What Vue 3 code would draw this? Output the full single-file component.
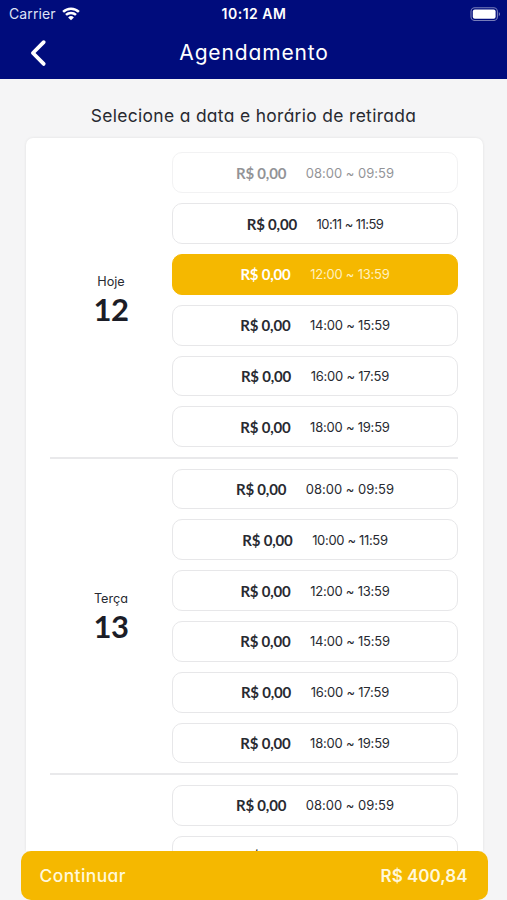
<script setup>
const days = [
  {
    label: 'Hoje',
    number: '12',
    slots: [
      { time: '08:00 ~ 09:59', state: 'disabled' },
      { time: '10:11 ~ 11:59' },
      { time: '12:00 ~ 13:59', state: 'selected' },
      { time: '14:00 ~ 15:59' },
      { time: '16:00 ~ 17:59' },
      { time: '18:00 ~ 19:59' },
    ],
  },
  {
    label: 'Terça',
    number: '13',
    slots: [
      { time: '08:00 ~ 09:59' },
      { time: '10:00 ~ 11:59' },
      { time: '12:00 ~ 13:59' },
      { time: '14:00 ~ 15:59' },
      { time: '16:00 ~ 17:59' },
      { time: '18:00 ~ 19:59' },
    ],
  },
  {
    label: '',
    number: '',
    slots: [{ time: '08:00 ~ 09:59' }, { time: '10:00 ~ 11:59' }],
  },
]

// Narrow figures are set tighter: each "1" takes a little off the line's tracking.
function tracking(time) {
  const ones = time.split('1').length - 1
  return `${((-1.45 * ones) / time.length).toFixed(3)}px`
}
</script>

<template>
  <div class="screen">
    <header class="header">
      <div class="status">
        <div class="carrier">
          <span class="carrier-name">Carrier</span>
          <svg class="wifi" viewBox="0 0 18 14" width="18" height="14">
            <path d="M1.1 4.9a11.3 11.3 0 0 1 15.8 0" />
            <path d="M4 7.9a7.2 7.2 0 0 1 10 0" />
            <path class="dot" d="M9 13.3 6.1 10.4a4.1 4.1 0 0 1 5.8 0Z" />
          </svg>
        </div>
        <span class="clock">10:12 AM</span>
        <svg class="battery" viewBox="0 0 31 14" width="31" height="14">
          <rect class="shell" x="1" y="0.7" width="26.4" height="12.8" rx="3.8" />
          <rect class="charge" x="2.8" y="2.5" width="22.8" height="9.2" rx="2" />
          <path class="tip" d="M28.8 5v4.2c1.7-.8 1.7-3.4 0-4.2Z" />
        </svg>
      </div>
      <div class="nav">
        <svg class="back" viewBox="0 0 18 28" width="18" height="28">
          <path d="M14.7 3.2 3.9 14l10.8 10.9" />
        </svg>
        <h1 class="title">Agendamento</h1>
      </div>
    </header>
    <p class="prompt">Selecione a data e horário de retirada</p>
    <main class="card">
      <section v-for="day in days" :key="day.number" class="day">
        <div class="date">
          <span v-if="day.label" class="weekday">{{ day.label }}</span>
          <strong v-if="day.number" class="number">{{ day.number }}</strong>
        </div>
        <div class="slots">
          <div v-for="slot in day.slots" :key="slot.time" class="slot" :class="slot.state">
            <span class="price">R$ 0,00</span>
            <span class="time" :style="{ letterSpacing: tracking(slot.time) }">{{ slot.time }}</span>
          </div>
        </div>
      </section>
    </main>
    <footer class="continue">
      <span class="action">Continuar</span>
      <span class="total">R$ 400,84</span>
    </footer>
  </div>
</template>

<style>
body {
  overflow: hidden;
}
</style>

<style scoped>
.screen {
  width: 507px;
  height: 900px;
  display: flex;
  flex-direction: column;
  overflow: hidden;
  background: #f5f5f6;
  color: #282a31;
  font-family: Inter, "Liberation Sans", sans-serif;
  font-feature-settings: "cv11", "calt" 0;
}
.header {
  flex: none;
  height: 79px;
  background: #000c7c;
  color: #fff;
}
.status {
  height: 27px;
  display: grid;
  grid-template-columns: 1fr auto 1fr;
  align-items: center;
  padding: 0 6px 0 9px;
}
.carrier {
  display: flex;
  align-items: center;
  gap: 6px;
}
.carrier-name {
  font-size: 14px;
  letter-spacing: 0.1px;
  color: #dfe2f5;
  font-feature-settings: normal;
}
.wifi {
  fill: none;
  stroke: #fff;
  stroke-width: 2.5;
}
.wifi .dot {
  fill: #fff;
  stroke: none;
}
.clock {
  font-size: 14px;
  font-weight: 600;
  letter-spacing: 0.5px;
  margin-right: 2px;
}
.battery {
  justify-self: end;
}
.shell {
  fill: none;
  stroke: #777db9;
  stroke-width: 1.1;
}
.charge {
  fill: #fff;
}
.tip {
  fill: #777db9;
}
.nav {
  height: 51px;
  display: grid;
  grid-template-columns: 1fr auto 1fr;
  align-items: center;
  padding: 0 28px 0 29px;
}
.back {
  fill: none;
  stroke: #fff;
  stroke-width: 3.8;
  stroke-linecap: round;
  stroke-linejoin: round;
}
.title {
  grid-column: 2;
  margin: 0;
  font-size: 21px;
  line-height: 30px;
  font-weight: 400;
  letter-spacing: 0.85px;
}
.prompt {
  flex: none;
  margin: 25px 0 10px;
  line-height: 24px;
  text-align: center;
  font-size: 17.4px;
  letter-spacing: 0.34px;
  white-space: nowrap;
}
.card {
  flex: 1;
  min-height: 0;
  margin: 0 24.5px 0 25.5px;
  padding: 4.4px 24.5px 0;
  overflow: hidden;
  border-radius: 7px 7px 0 0;
  background: #fff;
  box-shadow: 0 0 3px rgba(0, 0, 0, 0.09);
}
.day {
  display: flex;
  padding: 10px 0 9.5px;
  border-bottom: 2px solid #e9e9eb;
}
.date {
  width: 122px;
  flex: none;
  display: flex;
  flex-direction: column;
  align-items: center;
  justify-content: center;
  padding-top: 2px;
  box-sizing: border-box;
}
.weekday {
  font-size: 12.7px;
  line-height: 18px;
}
.number {
  font: 700 31px/37px Lato, sans-serif;
  letter-spacing: -0.4px;
  color: #1b1d27;
}
.slots {
  flex: 1;
  display: flex;
  flex-direction: column;
  gap: 10px;
}
.slot {
  box-sizing: border-box;
  flex: none;
  height: 40.8px;
  display: flex;
  align-items: center;
  justify-content: center;
  gap: 19.6px;
  border: 1.3px solid #e7e7e9;
  border-radius: 10px;
}
.price {
  font: 700 15px/20px Lato, sans-serif;
  letter-spacing: -0.2px;
  white-space: nowrap;
}
.time {
  font-size: 13px;
  line-height: 20px;
  white-space: nowrap;
}
.disabled {
  opacity: 0.5;
}
.selected {
  background: #f5b800;
  border-color: #f5b800;
  color: #fff;
}
.selected .time {
  color: #fff0bf;
}
.continue {
  flex: none;
  position: relative;
  height: 49px;
  box-sizing: border-box;
  margin: 0 19.5px 0 20.5px;
  padding: 0 20px 0 19px;
  display: flex;
  align-items: center;
  justify-content: space-between;
  border-radius: 10px;
  background: #f5b800;
  color: #fff8dc;
}
.action {
  font-size: 17.4px;
  font-weight: 500;
  letter-spacing: 0.45px;
}
.total {
  font-size: 17px;
  font-weight: 600;
}
</style>
